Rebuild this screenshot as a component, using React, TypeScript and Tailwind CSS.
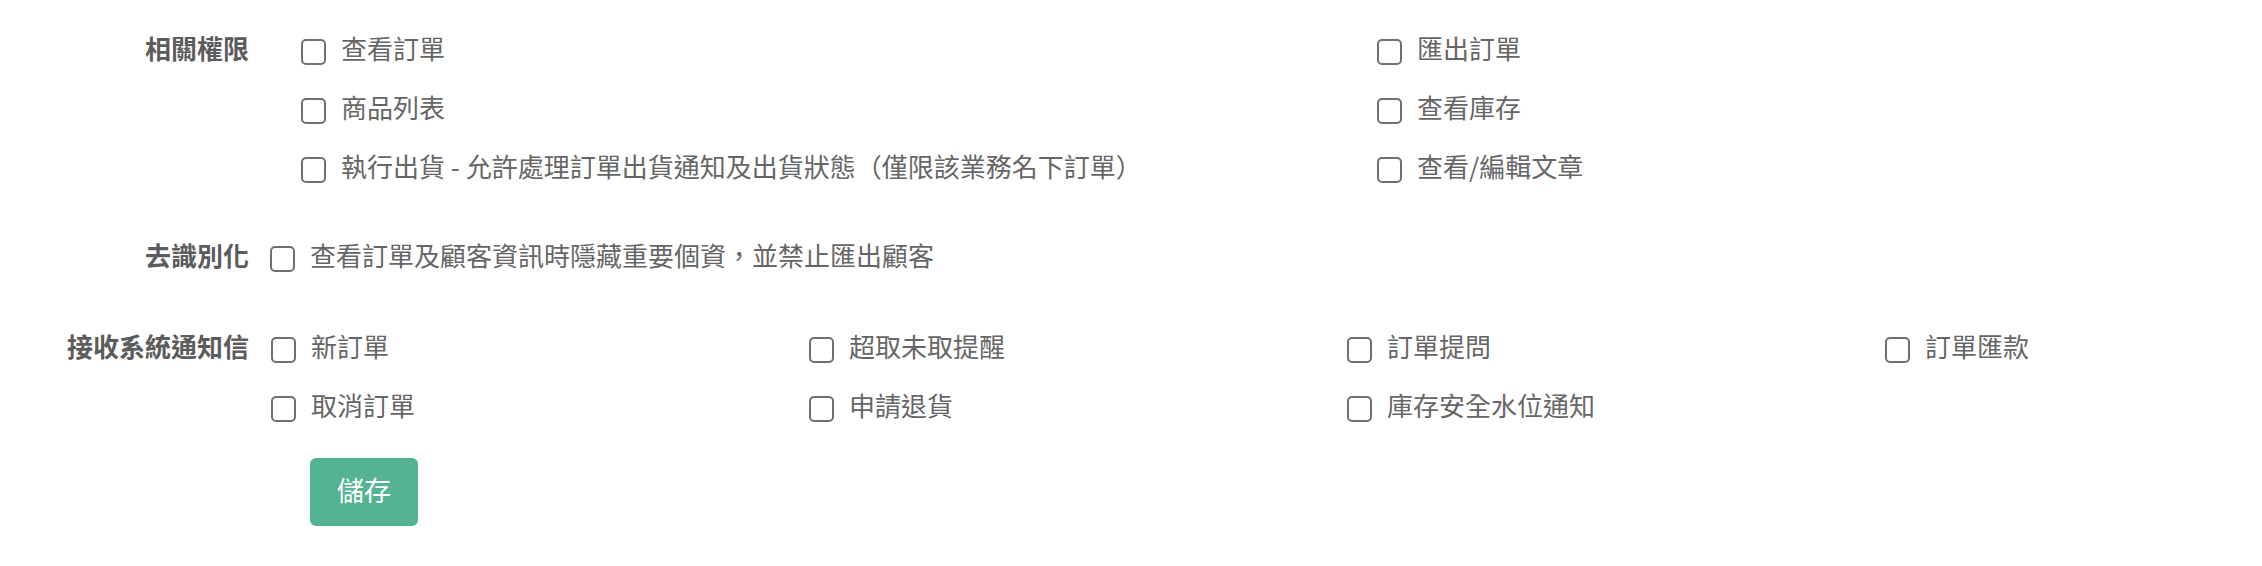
import React from "react";

const font = {
  fontFamily: '"Noto Sans CJK TC", "Noto Sans", sans-serif',
};

function Check({ label }: { label: string }) {
  return (
    <label className="flex h-[59px] items-center gap-[15px] text-[26px] text-[#666666]">
      <span className="mt-[8px] inline-block h-[26px] w-[25px] shrink-0 rounded-[5px] border-2 border-[#707070] bg-white" />
      <span className="whitespace-nowrap">{label}</span>
    </label>
  );
}

function Label({ text }: { text: string }) {
  return (
    <div className="flex h-[59px] w-[249px] shrink-0 items-center justify-end whitespace-nowrap text-[26px] font-bold text-[#5c5c5c]">
      {text}
    </div>
  );
}

export default function App() {
  return (
    <div className="min-h-[566px] w-full overflow-hidden bg-white pt-[18px]" style={font}>
      <section className="flex">
        <Label text="相關權限" />
        <div className="ml-[52px] grid flex-1 grid-cols-[1076px_1fr]">
          <Check label="查看訂單" />
          <Check label="匯出訂單" />
          <Check label="商品列表" />
          <Check label="查看庫存" />
          <Check label="執行出貨 - 允許處理訂單出貨通知及出貨狀態（僅限該業務名下訂單）" />
          <Check label="查看/編輯文章" />
        </div>
      </section>

      <section className="mt-[30px] flex">
        <Label text="去識別化" />
        <div className="ml-[21px] flex-1">
          <Check label="查看訂單及顧客資訊時隱藏重要個資，並禁止匯出顧客" />
        </div>
      </section>

      <section className="mt-[32px] flex">
        <Label text="接收系統通知信" />
        <div className="ml-[22px] flex-1">
          <div className="grid grid-cols-[538px_538px_538px_1fr]">
            <Check label="新訂單" />
            <Check label="超取未取提醒" />
            <Check label="訂單提問" />
            <Check label="訂單匯款" />
            <Check label="取消訂單" />
            <Check label="申請退貨" />
            <Check label="庫存安全水位通知" />
          </div>
          <button
            type="button"
            className="ml-[39px] mt-[24px] flex h-[68px] w-[108px] items-center justify-center rounded-[6px] bg-[#54b295] pb-[3px] text-[27px] text-white"
          >
            儲存
          </button>
        </div>
      </section>
    </div>
  );
}
